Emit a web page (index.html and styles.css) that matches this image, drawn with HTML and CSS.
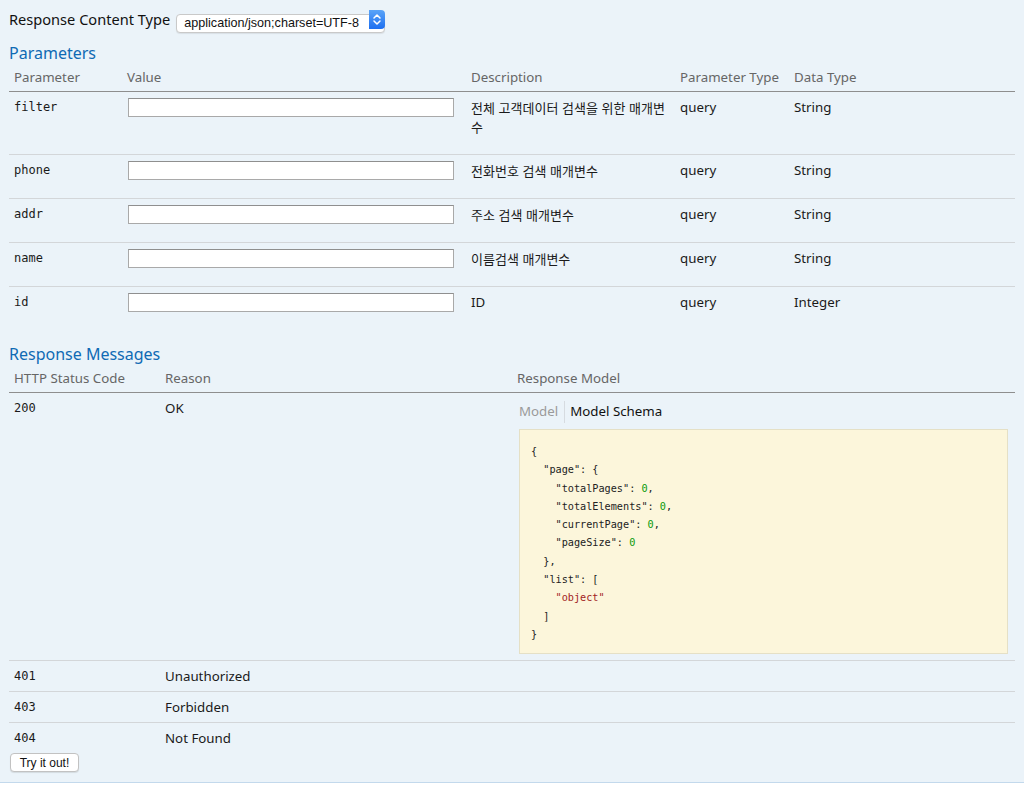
FILE: index.html
```html
<!DOCTYPE html>
<html lang="ko">
<head>
<meta charset="utf-8">
<title>Operation</title>
<link rel="stylesheet" href="styles.css">
</head>
<body>
<div class="content">
  <div class="ctype">
    <label class="ctype-label" for="ctype">Response Content Type</label>
    <span class="select-wrap">
      <select id="ctype" class="ctype-select"><option>application/json;charset=UTF-8</option></select>
      <span class="select-arrow">
        <svg width="16" height="19" viewBox="0 0 16 19"><path d="M5 8 L8 5 L11 8" fill="none" stroke="#fff" stroke-width="1.5" stroke-linecap="round" stroke-linejoin="round"/><path d="M5 11 L8 14 L11 11" fill="none" stroke="#fff" stroke-width="1.5" stroke-linecap="round" stroke-linejoin="round"/></svg>
      </span>
    </span>
  </div>

  <h4 class="section-title">Parameters</h4>
  <table class="grid params">
    <colgroup>
      <col class="c-param"><col class="c-value"><col class="c-desc"><col class="c-ptype"><col class="c-dtype">
    </colgroup>
    <thead>
      <tr><th>Parameter</th><th>Value</th><th>Description</th><th>Parameter Type</th><th>Data Type</th></tr>
    </thead>
    <tbody>
      <tr>
        <td class="code">filter</td>
        <td><input class="param-input" type="text"></td>
        <td class="ko">전체 고객데이터 검색을 위한 매개변수</td>
        <td>query</td>
        <td class="dtype">String</td>
      </tr>
      <tr>
        <td class="code">phone</td>
        <td><input class="param-input" type="text"></td>
        <td class="ko">전화번호 검색 매개변수</td>
        <td>query</td>
        <td class="dtype">String</td>
      </tr>
      <tr>
        <td class="code">addr</td>
        <td><input class="param-input" type="text"></td>
        <td class="ko">주소 검색 매개변수</td>
        <td>query</td>
        <td class="dtype">String</td>
      </tr>
      <tr>
        <td class="code">name</td>
        <td><input class="param-input" type="text"></td>
        <td class="ko">이름검색 매개변수</td>
        <td>query</td>
        <td class="dtype">String</td>
      </tr>
      <tr>
        <td class="code">id</td>
        <td><input class="param-input" type="text"></td>
        <td>ID</td>
        <td>query</td>
        <td class="dtype">Integer</td>
      </tr>
    </tbody>
  </table>

  <h4 class="section-title">Response Messages</h4>
  <table class="grid responses">
    <colgroup>
      <col class="c-code"><col class="c-reason"><col class="c-model">
    </colgroup>
    <thead>
      <tr><th>HTTP Status Code</th><th>Reason</th><th>Response Model</th></tr>
    </thead>
    <tbody>
      <tr class="row-200">
        <td class="code">200</td>
        <td>OK</td>
        <td>
          <div class="model-tabs">
            <span class="tab tab-off">Model</span><span class="tab tab-on">Model Schema</span>
          </div>
          <pre class="snippet">{
  "page": {
    "totalPages": <span class="num">0</span>,
    "totalElements": <span class="num">0</span>,
    "currentPage": <span class="num">0</span>,
    "pageSize": <span class="num">0</span>
  },
  "list": [
    <span class="str">"object"</span>
  ]
}</pre>
        </td>
      </tr>
      <tr class="row-short">
        <td class="code">401</td>
        <td>Unauthorized</td>
        <td></td>
      </tr>
      <tr class="row-short">
        <td class="code">403</td>
        <td>Forbidden</td>
        <td></td>
      </tr>
      <tr class="row-short">
        <td class="code">404</td>
        <td>Not Found</td>
        <td></td>
      </tr>
    </tbody>
  </table>
  <button class="try-btn" type="button">Try it out!</button>
</div>
</body>
</html>
```

FILE: styles.css
```css
html, body {
  margin: 0;
  padding: 0;
  background: #ffffff;
}

body {
  font-family: "Noto Sans", "Noto Sans CJK KR", sans-serif;
  color: #222;
}

.content {
  background: #ebf3f9;
  border-bottom: 1px solid #c3d9ec;
  padding: 10px 9px 10px 9px;
}

/* response content type */
.ctype {
  display: flex;
  align-items: center;
  height: 19px;
}

.ctype-label {
  font-size: 14.6px;
  line-height: 19px;
  color: #111;
  margin-right: 6px;
}

.select-wrap {
  position: relative;
  display: inline-block;
  height: 19px;
}

.ctype-select {
  appearance: none;
  -webkit-appearance: none;
  height: 19px;
  width: 209px;
  box-sizing: border-box;
  border: 1px solid #c9c9c9;
  border-radius: 4px;
  background: #fff;
  font-family: "Liberation Sans", Arial, sans-serif;
  font-size: 12.6px;
  color: #111;
  padding: 0 20px 0 7px;
  margin: 0;
  box-shadow: 0 1px 1px rgba(0,0,0,0.08);
}

.select-arrow {
  position: absolute;
  right: 0;
  top: 0;
  width: 16px;
  height: 19px;
  border-radius: 0 4px 4px 0;
  background: linear-gradient(#5aa4f8, #1d6ff0);
  display: flex;
}

/* headings */
.section-title {
  margin: 14px 0 0 0;
  font-size: 16px;
  line-height: 20px;
  font-weight: normal;
  color: #0f6ab4;
}

/* tables */
.grid {
  width: 100%;
  border-collapse: collapse;
  table-layout: fixed;
  font-size: 13.3px;
}

.grid th {
  text-align: left;
  font-weight: normal;
  color: #666;
  line-height: 19px;
  padding: 5px 5px 4px 5px;
  border-bottom: 1px solid #8e8e8e;
}

.grid td {
  vertical-align: top;
  line-height: 19px;
  padding: 6px 5px 18px 5px;
  border-bottom: 1px solid #d3d6d9;
  color: #1a1a1a;
}

.grid tbody tr:last-child td {
  border-bottom: none;
}

.c-param { width: 113px; }
.c-value { width: 344px; }
.c-desc { width: 209px; }
.c-ptype { width: 114px; }
.c-dtype { width: 226px; }

.c-code { width: 151px; }
.c-reason { width: 352px; }
.c-model { width: 503px; }

.code {
  font-family: "DejaVu Sans Mono", "Liberation Mono", monospace;
  font-size: 12px;
}

.dtype {
  padding-top: 8px;
}

.param-input {
  display: block;
  box-sizing: border-box;
  width: 326px;
  height: 19px;
  margin: 0 0 0 1px;
  border: 1px solid #a9a9a9;
  border-top-color: #8f8f8f;
  background: #fff;
  padding: 0 3px;
  font-size: 12px;
}

.grid td.ko {
  font-family: "Noto Sans CJK KR", sans-serif;
  font-size: 13px;
  line-height: 19px;
}

/* responses */
.responses td {
  padding: 6px 5px 5px 5px;
}

.responses .row-200 td {
  padding-bottom: 6px;
}

.model-tabs {
  display: flex;
  margin: 2px 2px 0 2px;
  height: 22px;
  line-height: 20px;
}

.tab {
  font-size: 13.3px;
}

.tab-off {
  color: #9a9a9a;
  padding-right: 6px;
  border-right: 1px solid #d6dbe0;
}

.tab-on {
  color: #111;
  padding-left: 5px;
}

.snippet {
  margin: 6px 2px 0 2px;
  background: #fcf6db;
  border: 1px solid #e5e0c6;
  padding: 13px 11px 9px 11px;
  font-family: "DejaVu Sans Mono", "Liberation Mono", monospace;
  font-size: 10.2px;
  line-height: 18.3px;
  color: #222;
}

.num {
  color: #0a9a0a;
}

.str {
  color: #a3241f;
}

.try-btn {
  display: block;
  margin: 0 0 0 1px;
  height: 19px;
  width: 69px;
  padding: 0;
  border: 1px solid #c2c2c2;
  border-radius: 4px;
  background: #fff;
  font-family: "Liberation Sans", Arial, sans-serif;
  font-size: 12px;
  color: #111;
  box-shadow: 0 1px 1px rgba(0,0,0,0.1);
}
```
